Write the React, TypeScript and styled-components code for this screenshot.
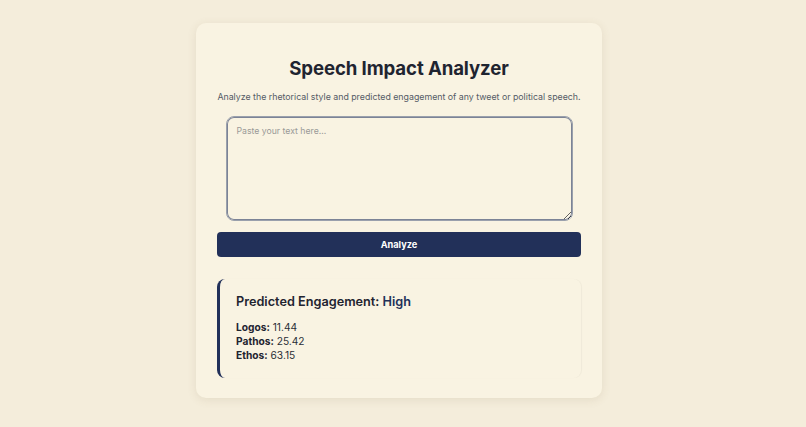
import React, { useState } from 'react';
import styled, { createGlobalStyle } from 'styled-components';

const GlobalStyle = createGlobalStyle`
  html, body {
    margin: 0;
    padding: 0;
    background: #f4eddb;
    font-family: Inter, "Noto Sans", sans-serif;
    color: #1f2430;
  }
`;

const Page = styled.div`
  display: flex;
  justify-content: center;
  align-items: flex-start;
  padding: 23px 8px 0 0;
  min-height: 427px;
  box-sizing: border-box;
`;

const Card = styled.main`
  width: 406px;
  box-sizing: border-box;
  padding: 34px 21px 20px;
  background: #f9f3e2;
  border-radius: 10px;
  box-shadow: 0 2px 10px rgba(120, 100, 60, 0.12);
  display: flex;
  flex-direction: column;
  align-items: center;
`;

const Title = styled.h1`
  margin: 0;
  font-size: 18.6px;
  font-weight: 700;
  color: #1f2430;
  letter-spacing: -0.1px;
`;

const Subtitle = styled.p`
  margin: 12px 0 0;
  font-size: 8.8px;
  color: #555b66;
  text-align: center;
  white-space: nowrap;
`;

const TextArea = styled.textarea`
  margin-top: 14px;
  width: 347px;
  height: 105px;
  box-sizing: border-box;
  padding: 9px 10px;
  font-family: inherit;
  font-size: 8.7px;
  color: #1f2430;
  background: #f9f3e2;
  border: 1px solid #9aa0ac;
  border-radius: 8px;
  outline: none;
  box-shadow: inset 0 0 0 1px #7c8396;
  resize: vertical;
  &::placeholder {
    color: #9a9a98;
  }
`;

const Button = styled.button`
  margin-top: 11px;
  width: 100%;
  height: 25px;
  border: none;
  border-radius: 4px;
  background: #223059;
  color: #ffffff;
  font-family: inherit;
  font-size: 9.2px;
  font-weight: 700;
  cursor: pointer;
`;

const Result = styled.section`
  margin-top: 22px;
  width: 100%;
  box-sizing: border-box;
  height: 99px;
  padding: 15px 16px;
  border-left: 3px solid #223059;
  border-radius: 8px;
  box-shadow: 1px 0 1px rgba(0, 0, 0, 0.04);
`;

const ResultTitle = styled.h2`
  margin: 0;
  font-size: 12.7px;
  font-weight: 600;
  color: #1f2430;
`;

const Level = styled.span`
  color: #223059;
`;

const Metrics = styled.div`
  margin-top: 11px;
  display: flex;
  flex-direction: column;
`;

const Metric = styled.div`
  font-size: 10.2px;
  line-height: 14px;
  color: #2a2e36;
  b {
    font-weight: 700;
    color: #1f2430;
  }
`;

const metrics = [
  { label: 'Logos', value: '11.44' },
  { label: 'Pathos', value: '25.42' },
  { label: 'Ethos', value: '63.15' },
];

export default function App() {
  const [text, setText] = useState('');

  return (
    <>
      <GlobalStyle />
      <Page>
        <Card>
          <Title>Speech Impact Analyzer</Title>
          <Subtitle>
            Analyze the rhetorical style and predicted engagement of any tweet or political speech.
          </Subtitle>
          <TextArea
            placeholder="Paste your text here..."
            value={text}
            onChange={(e) => setText(e.target.value)}
          />
          <Button>Analyze</Button>
          <Result>
            <ResultTitle>
              Predicted Engagement: <Level>High</Level>
            </ResultTitle>
            <Metrics>
              {metrics.map((m) => (
                <Metric key={m.label}>
                  <b>{m.label}:</b> {m.value}
                </Metric>
              ))}
            </Metrics>
          </Result>
        </Card>
      </Page>
    </>
  );
}
